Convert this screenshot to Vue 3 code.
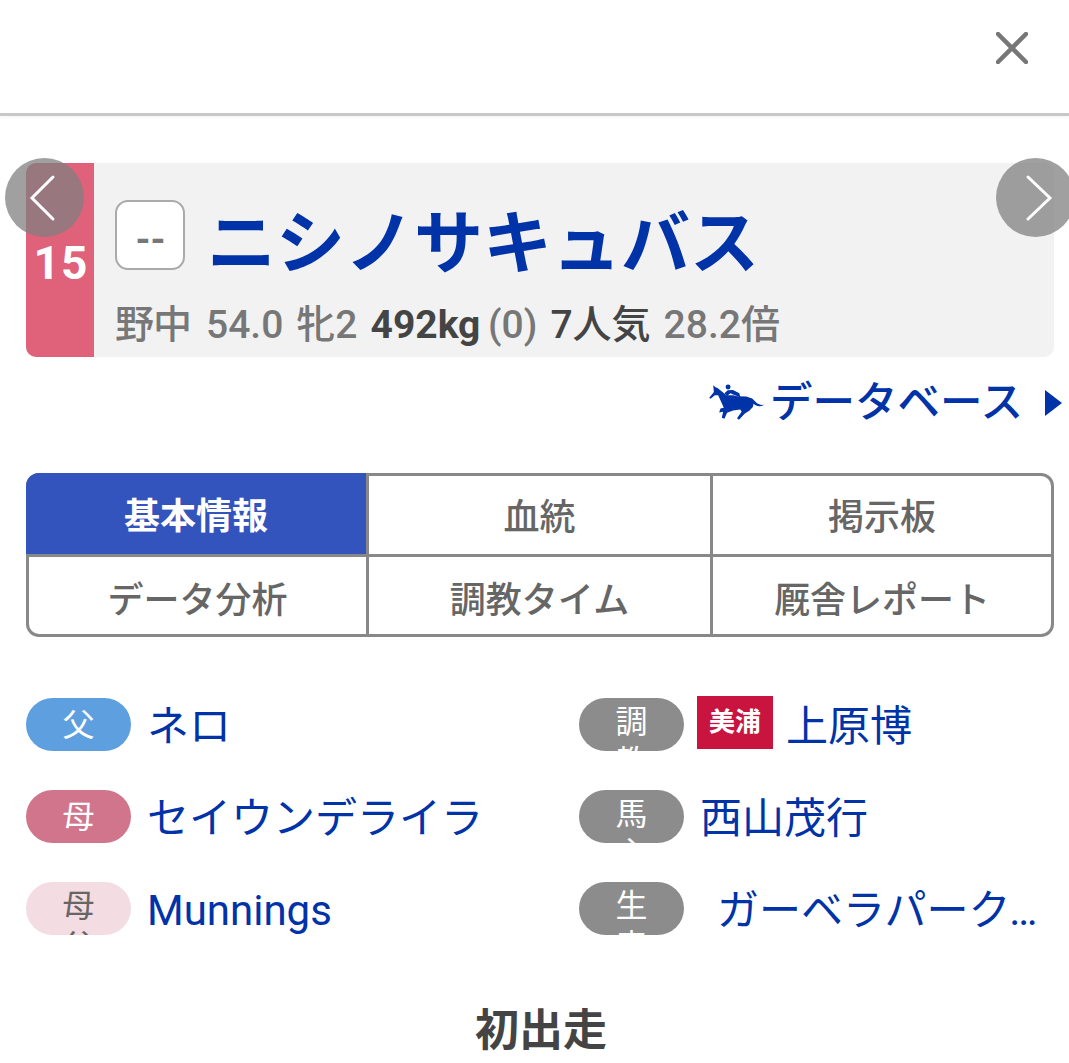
<script setup>
const tabs = ['基本情報', '血統', '掲示板', 'データ分析', '調教タイム', '厩舎レポート']
const left = [
  { label: '父', cls: 'father', name: 'ネロ' },
  { label: '母', cls: 'mother', name: 'セイウンデライラ' },
  { label: '母父', cls: 'damsire', name: 'Munnings' },
]
const right = [
  { label: '調教師', name: '上原博', badge: '美浦' },
  { label: '馬主', name: '西山茂行' },
  { label: '生産者', name: 'ガーベラパークスタッド', indent: true },
]
</script>

<template>
  <div class="page">
    <header class="top">
      <svg class="close" viewBox="0 0 32 32" width="32" height="32">
        <path d="M2 2 L30 30 M30 2 L2 30" stroke="#777" stroke-width="4.5" stroke-linecap="round" fill="none" />
      </svg>
    </header>

    <section class="card-wrap">
      <div class="card">
        <div class="num">15</div>
        <div class="info">
          <div class="title">
            <div class="mark">--</div>
            <h1 class="name">ニシノサキュバス</h1>
          </div>
          <p class="sub">
            <span class="jockey">野中</span><span>54.0</span><span>牝2</span>
            <span class="weight"><b>492kg</b> (0)</span>
            <span class="pop">7人気</span><span>28.2倍</span>
          </p>
        </div>
      </div>
      <button class="nav prev" aria-label="前へ">
        <svg viewBox="0 0 28 48" width="28" height="48"><path d="M25 3 L4 24 L25 45" stroke="#fff" stroke-width="3" stroke-linecap="round" stroke-linejoin="miter" fill="none" /></svg>
      </button>
      <button class="nav next" aria-label="次へ">
        <svg viewBox="0 0 28 48" width="28" height="48"><path d="M3 3 L25 24 L3 45" stroke="#fff" stroke-width="3" stroke-linecap="round" stroke-linejoin="miter" fill="none" /></svg>
      </button>
    </section>

    <div class="db">
      <svg class="horse" viewBox="25 35 171 115" width="57" height="38">
        <path fill="#0033a8" d="M28 80 L42 62 L40 42 L47 48 L53 50 L68 62 L80 72 L100 72 L112 75 L140 76 L158 82 L168 92 C175 100 182 102 195 101 C182 108 170 106 162 98 L160 108 L150 118 L135 128 L118 146 L112 142 L126 122 L122 115 L100 118 L82 125 L74 143 L66 140 L70 122 L58 124 L62 112 L72 110 L66 96 L55 72 L45 72 L32 83 Z" />
        <circle cx="85" cy="47" r="7.5" fill="#0033a8" />
        <path fill="#0033a8" d="M74 66 L84 57 L100 56 L119 66 L122 78 L100 70 L92 66 L82 74 Z" />
      </svg>
      <span class="db-text">データベース</span>
      <i class="tri"></i>
    </div>

    <nav class="tabs">
      <div v-for="(t, i) in tabs" :key="t" class="tab" :class="{ active: i === 0 }">{{ t }}</div>
    </nav>

    <section class="people">
      <div class="col">
        <div v-for="p in left" :key="p.label" class="row">
          <span class="pill" :class="[p.cls, { single: p.label.length === 1 }]">{{ p.label }}</span>
          <span class="pname">{{ p.name }}</span>
        </div>
      </div>
      <div class="col">
        <div v-for="p in right" :key="p.label" class="row">
          <span class="pill gray">{{ p.label }}</span>
          <span v-if="p.badge" class="badge">{{ p.badge }}</span>
          <span class="pname" :class="{ indent: p.indent, after: p.badge }">{{ p.name }}</span>
        </div>
      </div>
    </section>

    <p class="debut">初出走</p>
  </div>
</template>

<style>
html, body { margin: 0; background: #fff; overflow: hidden; }
</style>

<style scoped>
.page {
  width: 1069px;
  height: 1063px;
  overflow: hidden;
  background: #fff;
  font-family: Roboto, "Noto Sans CJK JP", sans-serif;
}
.top {
  border-bottom: 3px solid #c8c8c8;
  box-shadow: 0 2px 3px rgba(0, 0, 0, 0.04);
  display: flex;
  justify-content: flex-end;
  align-items: flex-start;
  padding: 32px 41px 0 0;
  height: 81px;
}
.card-wrap {
  position: relative;
  margin: 47px 15px 0 26px;
}
.card {
  display: flex;
  height: 194px;
  background: #f2f2f2;
  border-radius: 10px;
  overflow: hidden;
}
.num {
  width: 68px;
  flex: none;
  background: #df617a;
  color: #fff;
  font-size: 46px;
  font-weight: 700;
  letter-spacing: 1px;
  text-align: center;
  line-height: 194px;
  padding: 3px 0 0 2px;
  box-sizing: border-box;
}
.info { padding: 37px 0 0 21px; min-width: 0; }
.title { display: flex; align-items: center; gap: 22px; height: 70px; }
.mark {
  flex: none;
  width: 70px;
  height: 70px;
  box-sizing: border-box;
  background: #fff;
  border: 2px solid #aaa;
  border-radius: 13px;
  color: #777;
  font-size: 38px;
  font-weight: 700;
  padding: 10px 0 0 1px;
  display: flex;
  align-items: center;
  justify-content: center;
}
.name {
  margin: 20px 0 0;
  font-size: 69px;
  line-height: 70px;
  font-weight: 700;
  color: #0033a8;
  white-space: nowrap;
}
.sub {
  margin: 30px 0 0;
  display: flex;
  gap: 13px;
  font-size: 39px;
  line-height: 50px;
  font-weight: 500;
  color: #777;
  white-space: nowrap;
}
.sub b { font-weight: 700; color: #444; }
.jockey { letter-spacing: -1px; margin-right: 2px; }
.weight { word-spacing: -2px; }
.pop { color: #444; }
.nav {
  position: absolute;
  top: -5px;
  width: 79px;
  height: 79px;
  padding: 0;
  border: 0;
  border-radius: 50%;
  background: rgba(128, 128, 128, 0.75);
  display: flex;
  align-items: center;
  justify-content: center;
}
.prev { left: -21px; padding-right: 5px; }
.next { right: -21px; padding-left: 6px; }
.db {
  display: flex;
  align-items: center;
  justify-content: flex-end;
  height: 46px;
  margin-top: 23px;
  padding-right: 7px;
  color: #0033a8;
}
.horse { flex: none; margin-right: 5px; margin-top: -2px; }
.db-text { font-size: 42.5px; font-weight: 500; line-height: 46px; white-space: nowrap; }
.tri {
  width: 0;
  height: 0;
  margin-left: 22px;
  border-left: 17px solid #0033a8;
  border-top: 13.5px solid transparent;
  border-bottom: 13.5px solid transparent;
}
.tabs {
  margin: 47px 15px 0 26px;
  display: grid;
  grid-template-columns: 340px 344px 1fr;
  grid-template-rows: 81px 77px;
  height: 164px;
  box-sizing: border-box;
  padding: 3px;
  border-radius: 13px;
  overflow: hidden;
  background: #888;
}
.tab {
  background: #fff;
  color: #666;
  font-size: 36px;
  font-weight: 500;
  display: flex;
  align-items: center;
  justify-content: center;
  border-right: 3px solid #888;
  border-bottom: 3px solid #888;
  white-space: nowrap;
}
.tab:nth-child(-n + 3) { padding-bottom: 3px; }
.tab:nth-child(3n) { border-right: 0; }
.tab:nth-child(n + 4) { border-bottom: 0; padding-top: 3px; }
.tab:nth-child(3) { border-top-right-radius: 10px; }
.tab:nth-child(4) { border-bottom-left-radius: 10px; }
.tab:nth-child(6) { border-bottom-right-radius: 10px; }
.tab.active {
  background: #3353bd;
  color: #fff;
  font-weight: 700;
  margin: -3px 0 0 -3px;
  padding-bottom: 1px;
}
.people {
  margin: 61px 0 0 26px;
  display: grid;
  grid-template-columns: 553px 475px;
}
.col { display: flex; flex-direction: column; gap: 39px; min-width: 0; }
.row { display: flex; align-items: center; height: 53px; min-width: 0; }
.pill {
  flex: none;
  width: 105px;
  height: 53px;
  box-sizing: border-box;
  padding: 4px 36px 0;
  border-radius: 27px;
  overflow: hidden;
  font-size: 32px;
  line-height: 40px;
  text-align: center;
  color: #fff;
  word-break: break-all;
}
.pill.single { padding-top: 7px; }
.father { background: #5e9fe0; }
.mother { background: #d1758c; }
.pill.damsire { background: #f4dce3; color: #666; }
.gray { background: #8c8c8c; }
.badge {
  flex: none;
  width: 76px;
  height: 53px;
  margin: -5px 0 0 13px;
  background: #c8143f;
  color: #fff;
  font-size: 26px;
  font-weight: 700;
  line-height: 53px;
  text-align: center;
}
.pname {
  margin: 3px 0 0 16px;
  min-width: 0;
  font-size: 42px;
  line-height: 53px;
  color: #0033a8;
  white-space: nowrap;
  overflow: hidden;
  text-overflow: ellipsis;
}
.pname.after { margin-left: 13px; }
.pname.indent { margin-left: 33px; margin-right: 12px; }
.debut {
  margin: 66px 0 0;
  padding-left: 13px;
  text-align: center;
  font-size: 44px;
  line-height: 60px;
  font-weight: 700;
  color: #444;
}
</style>
